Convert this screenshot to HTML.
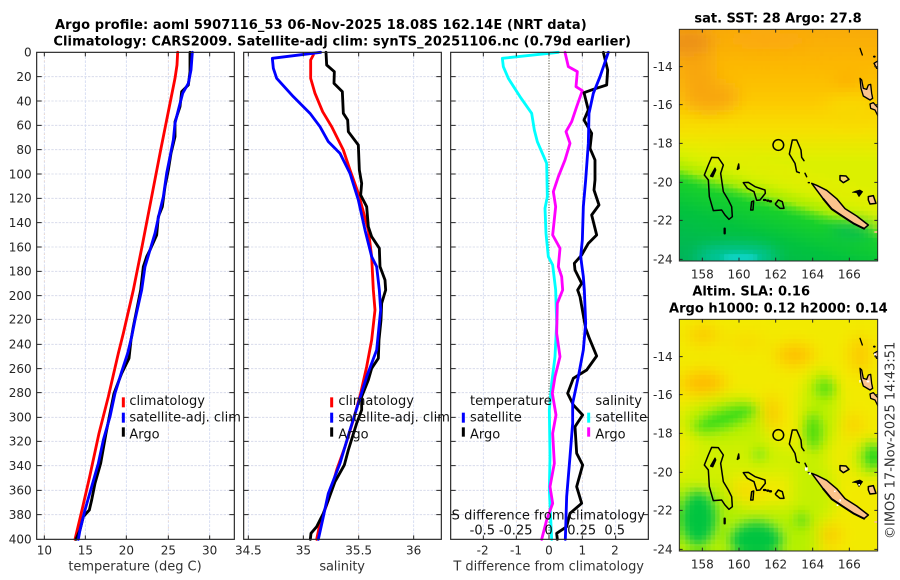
<!DOCTYPE html>
<html><head><meta charset="utf-8"><style>
html,body{margin:0;padding:0;background:#fff;width:900px;height:580px;overflow:hidden}
svg{display:block}
text{font-family:"DejaVu Sans","Liberation Sans",sans-serif;fill:#262626;font-size:36px}
.t{font-weight:bold;font-size:39px;fill:#000}
.l{font-size:39px;fill:#111}
.a{font-size:39px;fill:#333}
.m{text-anchor:middle}.e{text-anchor:end}
.c{fill:none;stroke-width:8.5;stroke-linejoin:round;stroke-linecap:round}
</style></head><body>
<svg width="900" height="580" viewBox="0 0 2700 1740" xmlns="http://www.w3.org/2000/svg">
<defs>
<clipPath id="mc"><rect x="58" y="88" width="595" height="695"/></clipPath>
<filter id="b6" x="-30%" y="-30%" width="160%" height="160%"><feGaussianBlur stdDeviation="6"/></filter>
<filter id="b25" x="-60%" y="-60%" width="220%" height="220%"><feGaussianBlur stdDeviation="25"/></filter>
<filter id="b16" x="-60%" y="-60%" width="220%" height="220%"><feGaussianBlur stdDeviation="18"/></filter>
<filter id="px" filterUnits="userSpaceOnUse" primitiveUnits="userSpaceOnUse" x="58" y="88" width="595" height="695" color-interpolation-filters="sRGB">
<feFlood x="65" y="95" width="3" height="3" flood-color="#000"/>
<feComposite x="58" y="88" width="15" height="15"/>
<feTile x="58" y="88" width="595" height="695" result="a"/>
<feComposite in="SourceGraphic" in2="a" operator="in"/>
<feMorphology operator="dilate" radius="7"/>
</filter>
<linearGradient id="g1" gradientUnits="userSpaceOnUse" x1="0" y1="88" x2="0" y2="480">
<stop offset="0" stop-color="#f8aa08"/><stop offset=".3" stop-color="#fcb800"/><stop offset=".55" stop-color="#fcc800"/><stop offset=".76" stop-color="#f6de00"/><stop offset="1" stop-color="#dcf000"/></linearGradient>
<linearGradient id="g2" gradientUnits="userSpaceOnUse" x1="89" y1="404" x2="-27" y2="788">
<stop offset="0" stop-color="#f0e800" stop-opacity="0"/><stop offset=".16" stop-color="#d4f000"/><stop offset=".25" stop-color="#a6ec00"/><stop offset=".29" stop-color="#58e010"/><stop offset=".35" stop-color="#18d028"/><stop offset=".55" stop-color="#02c23c"/><stop offset=".8" stop-color="#00b850"/><stop offset="1" stop-color="#00b060"/></linearGradient>
<g id="coast" stroke="#000" stroke-width="4.5" fill="none" stroke-linejoin="round" stroke-linecap="round">
<path d="M155 472L175 473 190 495 182 520 190 575 205 600 215 620 217 650 207 658 195 645 185 630 160 632 148 590 145 540 133 525 145 495Z"/>
<path d="M152 528L165 505 167 510 158 530Z" fill="#000"/>
<path d="M232 508L236 492 237 505Z" fill="#000"/>
<path d="M250 548L265 547 285 560 315 570 316 580 300 600 290 601 282 575 262 565Z"/>
<path d="M272 630L275 605 281 603 279 630Z"/>
<path d="M312 600h4M322 602h3M330 604h3" stroke-width="7"/>
<path d="M346 612L355 600 367 605 372 625 360 625 348 615Z"/>
<circle cx="355" cy="435" r="16"/>
<path d="M432 482L425 472 423 450 410 420 397 420 388 462 405 490 410 515 418 518M435 520L440 530M445 548h3"/>
<path d="M194 686V700" stroke-width="7"/>
<path d="M455 550L470 556 500 571 530 596 555 626 590 648 625 675 612 686 580 670 545 647 515 627 490 597Z" fill="#fbc38c"/>
<path d="M490 597L515 627 545 647 580 670 612 686" stroke-width="6"/>
<path d="M540 527L558 528 567 538 550 548 540 540Z" fill="#f6d870"/>
<path d="M577 577L588 573 600 570 608 575 597 590 590 578Z" fill="#000" stroke-width="2"/>
<path d="M625 590L640 587 648 610 630 612 625 600Z" fill="#fbc38c"/>
<path d="M600 145L607 165" stroke-width="4"/><path d="M642 170h2" stroke-width="6"/>
<path d="M655 182L642 190 650 205 655 205" fill="#fbc38c" stroke-width="4"/>
<path d="M600 235L605 240 610 265 620 268 625 255 632 253 635 280 638 295 630 300 610 288 603 265Z" fill="#fbc38c" stroke-width="4"/>
<path d="M630 312L640 308 655 325 655 350 645 330 632 325Z" fill="#fbc38c" stroke-width="4"/>
<path d="M645 696h10" stroke="#fbc38c" stroke-width="5"/>
</g>
<g id="ph">
<path d="M110 230H703M110 303H703M110 376H703M110 449H703M110 522H703M110 595H703M110 668H703M110 741H703M110 814H703M110 887H703M110 958H703M110 1033H703M110 1106H703M110 1178H703M110 1252H703M110 1324H703M110 1397H703M110 1471H703M110 1544H703" stroke="#d2d6e8" stroke-width="2.5" stroke-dasharray="7 4" fill="none"/>
</g>
<g id="pt">
<path d="M110 230h15M110 303h15M110 376h15M110 449h15M110 522h15M110 595h15M110 668h15M110 741h15M110 814h15M110 887h15M110 958h15M110 1033h15M110 1106h15M110 1178h15M110 1252h15M110 1324h15M110 1397h15M110 1471h15M110 1544h15M703 230h-15M703 303h-15M703 376h-15M703 449h-15M703 522h-15M703 595h-15M703 668h-15M703 741h-15M703 814h-15M703 887h-15M703 958h-15M703 1033h-15M703 1106h-15M703 1178h-15M703 1252h-15M703 1324h-15M703 1397h-15M703 1471h-15M703 1544h-15" stroke="#262626" stroke-width="3" fill="none"/>
<rect x="110" y="157" width="593" height="1461" fill="none" stroke="#262626" stroke-width="3.5"/>
</g>
<g id="mapt">
<rect x="2038" y="88" width="595" height="695" fill="none" stroke="#262626" stroke-width="3"/>
<path d="M2107 88v10M2217 88v10M2327 88v10M2438 88v10M2548 88v10M2107 783v-10M2217 783v-10M2327 783v-10M2438 783v-10M2548 783v-10M2038 200h10M2038 314h10M2038 430h10M2038 547h10M2038 661h10M2038 778h10M2633 200h-10M2633 314h-10M2633 430h-10M2633 547h-10M2633 661h-10M2633 778h-10" stroke="#262626" stroke-width="3" fill="none"/>
<g class="e"><text x="2018" y="213" class="e">-14</text><text x="2018" y="327" class="e">-16</text><text x="2018" y="443" class="e">-18</text><text x="2018" y="560" class="e">-20</text><text x="2018" y="674" class="e">-22</text><text x="2018" y="791" class="e">-24</text></g>
<text x="2107" y="836" class="m">158</text><text x="2217" y="836" class="m">160</text><text x="2327" y="836" class="m">162</text><text x="2438" y="836" class="m">164</text><text x="2548" y="836" class="m">166</text>
</g>
</defs>

<!-- titles -->
<text x="165" y="87" class="t" textLength="1595">Argo profile: aoml 5907116_53 06-Nov-2025 18.08S 162.14E (NRT data)</text>
<text x="160" y="137" class="t" textLength="1733">Climatology: CARS2009. Satellite-adj clim: synTS_20251106.nc (0.79d earlier)</text>
<text x="2083" y="67" class="t" textLength="502">sat. SST: 28 Argo: 27.8</text>
<text x="2077" y="887" class="t" textLength="353">Altim. SLA: 0.16</text>
<text x="2007" y="937" class="t" textLength="656">Argo h1000: 0.12 h2000: 0.14</text>

<!-- horizontal grid -->
<use href="#ph"/><use href="#ph" x="621"/><use href="#ph" x="1242"/>
<!-- vertical grids -->
<path d="M133 157V1618M256 157V1618M379 157V1618M505 157V1618M629 157V1618M745 157V1618M910 157V1618M1076 157V1618M1241 157V1618M1450 157V1618M1549 157V1618M1747 157V1618M1847 157V1618" stroke="#d0d8f0" stroke-width="2.5" stroke-dasharray="8 4" fill="none"/>
<path d="M133 161V1618M505 161V1618M1076 161V1618M1549 161V1618M1747 161V1618" stroke="#efd4c0" stroke-width="2.5" stroke-dasharray="4 16" fill="none"/>
<path d="M1647 157V1618" stroke="#3a3a20" stroke-width="3" stroke-dasharray="3 5" fill="none"/>

<!-- panel 1 -->
<path class="c" stroke="#f00" d="M533 157L531 195 525 235 510 310 482 450 454 595 427 735 400 870 370 1000 355 1060 325 1190 297 1300 269 1430 246 1530 225 1618"/>
<path class="c" stroke="#000" d="M570 157L570 215 565 255 545 275 540 320 525 365 525 410 513 460 505 510 495 560 487 620 475 650 470 705 450 750 440 770 430 800 422 870 410 930 400 980 393 1020 387 1075 365 1120 342 1180 330 1240 318 1300 302 1390 285 1450 275 1500 268 1530 250 1550 240 1590 228 1618"/>
<path class="c" stroke="#00f" d="M577 157L573 210 565 250 548 280 535 330 525 370 520 420 510 470 500 520 490 590 478 640 465 700 450 750 435 800 425 870 405 960 395 1010 383 1060 365 1115 345 1180 330 1250 310 1320 295 1390 275 1460 255 1530 240 1590 235 1618"/>
<!-- panel 2 -->
<path class="c" stroke="#f00" d="M940 165L932 180 932 235 945 280 968 335 995 380 1030 450 1050 510 1075 580 1105 690 1115 770 1120 870 1125 930 1115 1020 1100 1100 1082 1180 1060 1260 1035 1340 1010 1410 985 1500 960 1570 950 1618"/>
<path class="c" stroke="#000" d="M978 157L980 195 1003 215 1002 250 1027 275 1030 340 1043 360 1045 395 1075 435 1078 510 1085 550 1082 585 1100 620 1105 680 1115 710 1138 745 1140 800 1155 840 1157 870 1145 910 1143 960 1137 1020 1135 1075 1115 1105 1105 1140 1085 1190 1085 1230 1070 1270 1045 1350 1033 1395 1005 1445 985 1500 970 1540 950 1580 933 1600 931 1618"/>
<path class="c" stroke="#00f" d="M962 157L817 175 820 205 830 235 880 290 930 340 960 380 985 425 1020 460 1050 520 1075 600 1095 690 1115 770 1130 800 1138 870 1142 930 1130 1050 1100 1130 1075 1210 1050 1290 1020 1390 985 1480 970 1550 955 1618"/>
<!-- panel 3 -->
<path class="c" stroke="#0ff" d="M1675 157L1507 175 1510 200 1525 235 1560 290 1595 340 1603 390 1612 425 1640 490 1642 590 1635 625 1638 700 1645 770 1658 795 1667 870 1670 970 1665 1070 1655 1150 1648 1230 1650 1370 1648 1470 1655 1618"/>
<path class="c" stroke="#f0f" d="M1695 157L1705 200 1732 215 1728 260 1747 272 1730 320 1715 365 1698 395 1710 430 1695 480 1675 530 1660 575 1667 620 1658 705 1680 745 1675 800 1685 830 1688 870 1672 910 1670 1000 1680 1070 1665 1130 1657 1180 1668 1245 1658 1300 1663 1390 1650 1460 1658 1510 1640 1560 1625 1618"/>
<path class="c" stroke="#000" d="M1810 157L1823 210 1820 255 1780 268 1752 278 1765 330 1752 360 1775 400 1770 445 1785 480 1785 540 1782 570 1797 615 1775 645 1790 705 1765 730 1745 765 1723 790 1725 810 1745 850 1733 870 1740 890 1748 935 1757 985 1768 1015 1790 1068 1760 1110 1720 1135 1703 1180 1720 1215 1748 1245 1725 1280 1730 1360 1748 1395 1730 1460 1745 1510 1710 1540 1700 1580 1670 1600 1672 1618"/>
<path class="c" stroke="#00f" d="M1825 157L1800 230 1780 280 1767 340 1765 430 1757 540 1750 620 1747 720 1742 770 1750 830 1753 870 1757 970 1750 1050 1735 1130 1718 1210 1718 1270 1710 1370 1700 1490 1696 1618"/>

<!-- frames + ticks -->
<use href="#pt"/><use href="#pt" x="621"/><use href="#pt" x="1242"/>
<path d="M133 157v12M256 157v12M379 157v12M505 157v12M629 157v12M133 1618v-12M256 1618v-12M379 1618v-12M505 1618v-12M629 1618v-12M745 157v12M910 157v12M1076 157v12M1241 157v12M745 1618v-12M910 1618v-12M1076 1618v-12M1241 1618v-12M1450 157v12M1549 157v12M1647 157v12M1747 157v12M1847 157v12M1450 1618v-12M1549 1618v-12M1647 1618v-12M1747 1618v-12M1847 1618v-12" stroke="#262626" stroke-width="3" fill="none"/>

<!-- y labels -->
<g>
<text x="95" y="170" class="e">0</text><text x="95" y="243" class="e">20</text><text x="95" y="316" class="e">40</text><text x="95" y="389" class="e">60</text><text x="95" y="462" class="e">80</text><text x="95" y="535" class="e">100</text><text x="95" y="608" class="e">120</text><text x="95" y="681" class="e">140</text><text x="95" y="754" class="e">160</text><text x="95" y="827" class="e">180</text><text x="95" y="900" class="e">200</text><text x="95" y="971" class="e">220</text><text x="95" y="1046" class="e">240</text><text x="95" y="1119" class="e">260</text><text x="95" y="1191" class="e">280</text><text x="95" y="1265" class="e">300</text><text x="95" y="1337" class="e">320</text><text x="95" y="1410" class="e">340</text><text x="95" y="1484" class="e">360</text><text x="95" y="1557" class="e">380</text><text x="95" y="1631" class="e">400</text>
</g>
<!-- x labels -->
<text x="133" y="1663" class="m">10</text><text x="256" y="1663" class="m">15</text><text x="379" y="1663" class="m">20</text><text x="505" y="1663" class="m">25</text><text x="629" y="1663" class="m">30</text>
<text x="745" y="1663" class="m">34.5</text><text x="910" y="1663" class="m">35</text><text x="1076" y="1663" class="m">35.5</text><text x="1241" y="1663" class="m">36</text>
<text x="1448" y="1663" class="m">-2</text><text x="1548" y="1663" class="m">-1</text><text x="1647" y="1663" class="m">0</text><text x="1747" y="1663" class="m">1</text><text x="1845" y="1663" class="m">2</text>
<text x="205" y="1711" class="a" textLength="400">temperature (deg C)</text>
<text x="958" y="1711" class="a" textLength="137">salinity</text>
<text x="1360" y="1711" class="a" textLength="572">T difference from climatology</text>

<!-- legends -->
<path d="M370 1192v30" stroke="#f00" stroke-width="9"/><path d="M370 1238v30" stroke="#00f" stroke-width="9"/><path d="M370 1282v28" stroke="#000" stroke-width="9"/>
<text x="388" y="1215" class="l">climatology</text><text x="388" y="1265" class="l">satellite-adj. clim</text><text x="388" y="1316" class="l">Argo</text>
<path d="M995 1192v30" stroke="#f00" stroke-width="9"/><path d="M995 1238v30" stroke="#00f" stroke-width="9"/><path d="M995 1282v28" stroke="#000" stroke-width="9"/>
<text x="1015" y="1215" class="l">climatology</text><text x="1015" y="1265" class="l">satellite-adj. clim</text><text x="1015" y="1316" class="l">Argo</text>
<text x="1410" y="1215" class="l">temperature</text><text x="1786" y="1215" class="l">salinity</text>
<path d="M1390 1238v30" stroke="#00f" stroke-width="9"/><path d="M1390 1282v28" stroke="#000" stroke-width="9"/>
<path d="M1766 1238v30" stroke="#0ff" stroke-width="9"/><path d="M1766 1282v28" stroke="#f0f" stroke-width="9"/>
<text x="1410" y="1265" class="l">satellite</text><text x="1410" y="1316" class="l">Argo</text>
<text x="1786" y="1265" class="l">satellite</text><text x="1786" y="1316" class="l">Argo</text>
<text x="1355" y="1558" class="l" textLength="580">S difference from climatology</text>
<text x="1447" y="1603" class="l m">-0.5</text><text x="1547" y="1603" class="l m">-0.25</text><text x="1646" y="1603" class="l m">0</text><text x="1745" y="1603" class="l m">0.25</text><text x="1844" y="1603" class="l m">0.5</text>

<!-- map 1 -->
<g transform="translate(1980,0)">
<g clip-path="url(#mc)">
<g filter="url(#px)">
<rect x="58" y="88" width="595" height="700" fill="url(#g1)"/>
<g filter="url(#b25)">
<ellipse cx="90" cy="130" rx="70" ry="50" fill="#ec9014"/>
<ellipse cx="150" cy="290" rx="90" ry="50" fill="#f8a608"/>
<ellipse cx="110" cy="220" rx="60" ry="60" fill="#f8a60c"/>
<ellipse cx="560" cy="245" rx="40" ry="18" fill="#fba800"/>
<ellipse cx="320" cy="120" rx="130" ry="25" fill="#fba808"/>
<ellipse cx="570" cy="330" rx="70" ry="40" fill="#f8d800"/>
</g>
<rect x="58" y="400" width="595" height="390" fill="url(#g2)"/>
<g filter="url(#b25)"><ellipse cx="230" cy="775" rx="120" ry="30" fill="#00c8ac"/><ellipse cx="580" cy="690" rx="70" ry="20" fill="#00b45c"/></g>
<ellipse cx="240" cy="778" rx="50" ry="12" fill="#10d4c4" filter="url(#b6)"/>
</g>
<use href="#coast"/>
</g>
</g>
<use href="#mapt"/>

<!-- map 2 -->
<g transform="translate(1980,870)">
<g clip-path="url(#mc)">
<g filter="url(#px)">
<rect x="58" y="88" width="595" height="700" fill="#f2ea00"/>
<g transform="translate(0,-15)">
<g filter="url(#b25)">
<ellipse cx="130" cy="700" rx="130" ry="140" fill="#a8ee00"/>
<ellipse cx="320" cy="760" rx="170" ry="100" fill="#b4f000"/>
<ellipse cx="200" cy="410" rx="140" ry="75" fill="#b8f000"/>
<ellipse cx="300" cy="520" rx="130" ry="60" fill="#d0f000"/>
<ellipse cx="460" cy="620" rx="70" ry="120" fill="#c4f000"/>
<ellipse cx="480" cy="380" rx="60" ry="130" fill="#bcf000"/>
<ellipse cx="625" cy="520" rx="50" ry="60" fill="#b8f000"/>
<ellipse cx="130" cy="550" rx="70" ry="70" fill="#d0f000"/>
<ellipse cx="130" cy="150" rx="50" ry="30" fill="#fcc800"/>
<ellipse cx="405" cy="210" rx="60" ry="35" fill="#ffbc00"/>
<ellipse cx="130" cy="295" rx="70" ry="38" fill="#ffb800"/>
<ellipse cx="335" cy="385" rx="28" ry="55" fill="#fcc800"/>
<ellipse cx="510" cy="750" rx="35" ry="35" fill="#fdc800"/>
<ellipse cx="580" cy="420" rx="35" ry="35" fill="#fbd000"/>
<ellipse cx="600" cy="210" rx="35" ry="60" fill="#fcc800"/>
<ellipse cx="260" cy="170" rx="60" ry="30" fill="#f8dc00"/>
<ellipse cx="260" cy="620" rx="60" ry="30" fill="#f8dc00"/>
</g>
<g filter="url(#b16)">
<ellipse cx="195" cy="400" rx="100" ry="30" transform="rotate(-18 195 400)" fill="#38dc14"/>
<ellipse cx="495" cy="310" rx="32" ry="32" fill="#58e008"/>
<ellipse cx="460" cy="440" rx="28" ry="58" fill="#48dc10"/>
<ellipse cx="298" cy="508" rx="24" ry="22" fill="#78e808"/>
<ellipse cx="640" cy="515" rx="30" ry="40" fill="#18d420"/>
<ellipse cx="115" cy="700" rx="58" ry="85" fill="#04c440"/>
<ellipse cx="288" cy="765" rx="82" ry="58" fill="#04c440"/>
<ellipse cx="425" cy="705" rx="24" ry="28" fill="#60e010"/>
</g>
</g>
</g>
<use href="#coast"/>
<path d="M435 532h8v10h-8zM446 548h6v6h-6zM522 602h5v4h-5zM538 628h5v6h-5zM530 643h5v5h-5zM595 582h5v5h-5zM620 272h8v5h-8zM642 190h6v6h-6zM598 270h4v8h-4z" fill="#fff"/>
</g>
</g>
<use href="#mapt" y="870"/>

<text transform="translate(2683,1617) rotate(-90)" class="a" textLength="592">©IMOS 17-Nov-2025 14:43:51</text>
</svg>
</body></html>
